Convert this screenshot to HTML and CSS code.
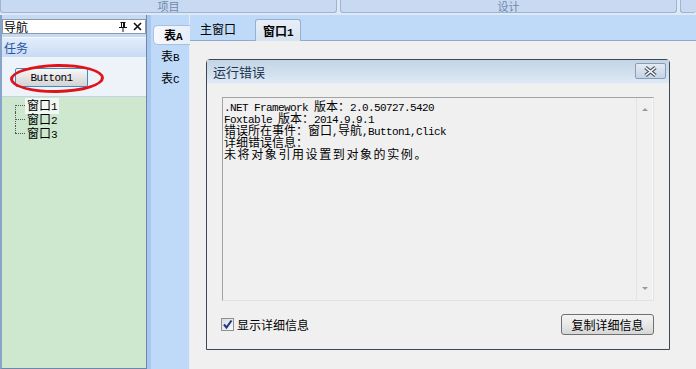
FILE: index.html
```html
<!DOCTYPE html>
<html lang="zh-CN">
<head>
  <meta charset="UTF-8" />
  <title>运行错误</title>
  <link rel="stylesheet" href="styles.css">
</head>
<body>
  <div class="topbar">
    <div class="tb-btn">项目</div>
    <div class="tb-btn">设计</div>
    <div class="tb-btn tb-rest"></div>
  </div>

  <div class="main">
    <div class="nav">
      <div class="nav-head">
        <span>导航</span>
        <span class="nav-tools">
          <svg width="8" height="10" viewBox="0 0 8 10"><path d="M1.5 0.5h5M2.5 0.5v5M5.5 0.5v5M4.5 0.5v5M0 5.5h8M4 6v4" stroke="#111" fill="none"/></svg>
          <svg width="9" height="9" viewBox="0 0 9 9"><path d="M1 1L8 8M8 1L1 8" stroke="#111" stroke-width="1.6" fill="none"/></svg>
        </span>
      </div>
      <div class="nav-task">任务</div>
      <div class="nav-btns">
        <button class="btn1">Button1</button>
        <span class="ring"></span>
      </div>
      <ul class="tree">
        <li><span class="sel">窗口<span class="en">1</span></span></li>
        <li>窗口<span class="en">2</span></li>
        <li>窗口<span class="en">3</span></li>
      </ul>
    </div>

    <div class="workspace">
      <div class="vtabs">
        <div class="vtab active">表<b class="en">A</b></div>
        <div class="vtab">表<span class="en">B</span></div>
        <div class="vtab">表<span class="en">C</span></div>
      </div>
      <div class="htabs">
        <div class="htab">主窗口</div>
        <div class="htab active">窗口<b class="en">1</b></div>
      </div>
      <div class="content">
        <div class="dialog">
          <div class="dlg-title">
            <span>运行错误</span>
            <span class="dlg-close">
              <svg width="15" height="11" viewBox="0 0 15 11"><path d="M2.5 1.5L12.5 9.5M12.5 1.5L2.5 9.5" stroke="#4a5666" stroke-width="3.6" fill="none"/><path d="M2.5 1.5L12.5 9.5M12.5 1.5L2.5 9.5" stroke="#fff" stroke-width="1.6" fill="none"/></svg>
            </span>
          </div>
          <div class="dlg-body">
            <div class="textbox">
              <div class="log">
                <div><span class="en">.NET Framework </span>版本：<span class="en">2.0.50727.5420</span></div>
                <div><span class="en">Foxtable </span>版本：<span class="en">2014.9.9.1</span></div>
                <div>错误所在事件：窗口<span class="en">,</span>导航<span class="en">,Button1,Click</span></div>
                <div>详细错误信息：</div>
                <div class="wide">未将对象引用设置到对象的实例。</div>
              </div>
              <div class="vscroll">
                <span class="arrow up"></span>
                <span class="arrow down"></span>
              </div>
            </div>
            <div class="dlg-foot">
              <label class="check">
                <span class="box">
                  <svg width="11" height="11" viewBox="0 0 11 11"><path d="M2 5.5L4.5 8.5L9.5 1.5" stroke="#23347a" stroke-width="2" fill="none"/></svg>
                </span>
                显示详细信息
              </label>
              <button class="copy-btn">复制详细信息</button>
            </div>
          </div>
        </div>
      </div>
    </div>
  </div>
</body>
</html>
```

FILE: styles.css
```css
body {
  margin: 0;
  width: 696px;
  height: 369px;
  overflow: hidden;
  background: #f0f0f0;
  font-family: "Noto Sans CJK SC", sans-serif;
  font-size: 12px;
  color: #000;
}

.en {
  font-family: "Liberation Mono", monospace;
  font-size: 11px;
  letter-spacing: -0.6px;
}

/* Top ribbon buttons */
.topbar {
  display: flex;
  gap: 3px;
  height: 15px;
  background: #dfe9f5;
}

.tb-btn {
  flex: 0 0 335px;
  height: 12px;
  line-height: 12px;
  border: 1px solid #9db4d2;
  border-top: none;
  border-radius: 0 0 3px 3px;
  background: #c7daf1;
  color: #7088ab;
  text-align: center;
  font-size: 11px;
}

.tb-rest {
  flex: 1;
  border-right: none;
}

.main {
  display: flex;
  height: 354px;
}

/* Navigation panel */
.nav {
  width: 144px;
  border-left: 2px solid #88a4ca;
  border-right: 1px solid #6d87ab;
  border-bottom: 1px solid #6d87ab;
  background: #cde8cf;
  display: flex;
  flex-direction: column;
}

.nav-head {
  display: flex;
  justify-content: space-between;
  align-items: center;
  height: 13px;
  margin-top: 4px;
  padding: 0 3px 0 1px;
  background: #fff;
  border: 1px solid #8d9aab;
  box-shadow: 0 -4px 0 #c6daf3;
  line-height: 13px;
}

.nav-tools {
  display: flex;
  align-items: center;
  gap: 6px;
}

.nav-tools svg {
  display: block;
}

.nav-task {
  margin-top: 3px;
  height: 19px;
  line-height: 19px;
  padding-left: 2px;
  border-top: 1px solid #f4f8fd;
  background: linear-gradient(#e3edf9, #c8dbf4);
  color: #2456a6;
  box-shadow: 0 -3px 0 #c6daf3;
}

.nav-btns {
  position: relative;
  height: 39px;
  background: #eef3fa;
  border-bottom: 1px solid #c7d3e2;
}

.btn1 {
  margin: 11px 0 0 13px;
  width: 73px;
  height: 19px;
  padding: 0;
  border: 1px solid #3b8ccd;
  border-radius: 2px;
  background: linear-gradient(#f8f8f8, #e4e4e4 50%, #d4d4d4);
  font-family: "Liberation Mono", monospace;
  font-size: 11px;
  letter-spacing: -0.6px;
  color: #000;
}

.ring {
  position: absolute;
  left: 8px;
  top: 7px;
  width: 88px;
  height: 23px;
  border: 3px solid #e01418;
  border-radius: 50%;
  transform: rotate(-1deg);
}

.tree {
  list-style: none;
  margin: 1px 0 0 13px;
  padding: 0;
}

.tree li {
  position: relative;
  height: 14px;
  line-height: 14px;
  padding-left: 12px;
}

.tree li::before {
  content: "";
  position: absolute;
  left: 0;
  top: 7px;
  width: 10px;
  border-top: 1px dotted #555;
}

.tree li::after {
  content: "";
  position: absolute;
  left: 0;
  top: 0;
  height: 14px;
  border-left: 1px dotted #555;
}

.tree li:first-child::after {
  top: 7px;
  height: 7px;
}

.tree li:last-child::after {
  height: 7px;
}

.tree .sel {
  display: inline-block;
  margin-left: -2px;
  padding: 0 2px;
  background: #f3f7f3;
}

/* Document workspace */
.workspace {
  flex: 1;
  display: grid;
  grid-template-columns: 43px 1fr;
  grid-template-rows: 26px 1fr;
  background: #bfdaf9;
}

.vtabs {
  grid-row: 1 / 3;
  border-left: 4px solid #a8c6ee;
  border-right: 1px solid #e6edf6;
  padding: 10px 0 0 2px;
}

.vtab {
  height: 22px;
  line-height: 22px;
  padding-left: 8px;
}

.vtab.active {
  height: 18px;
  line-height: 18px;
  padding-left: 10px;
  margin-right: -1px;
  border-radius: 5px 0 0 5px;
  background: linear-gradient(90deg, #f6f9fd, #e6eef8);
  border: 1px solid #a9c0df;
  border-right: none;
  font-weight: bold;
}

.htabs {
  display: flex;
  align-items: flex-end;
  gap: 10px;
  padding-left: 1px;
  border-bottom: 1px solid #8eaad0;
}

.htab {
  height: 22px;
  line-height: 22px;
  padding: 0 9px;
}

.htab.active {
  padding: 0 7px;
  height: 21px;
  background: linear-gradient(#e8eff8, #d7e3f2);
  border: 1px solid #97b0d2;
  border-bottom: none;
  border-radius: 3px 3px 0 0;
  font-weight: bold;
  margin-bottom: -1px;
}

.content {
  background: #f0f0f0;
  padding: 18px 0 0 16px;
}

/* Error dialog */
.dialog {
  width: 462px;
  height: 289px;
  border: 1px solid #3d4853;
  border-radius: 4px 4px 0 0;
  background: #f0f0f0;
  display: flex;
  flex-direction: column;
}

.dlg-title {
  height: 23px;
  display: flex;
  justify-content: space-between;
  align-items: center;
  padding: 0 3px 0 6px;
  background: linear-gradient(#c3d4e5, #dde9f5);
  border-bottom: 1px solid #e9eff6;
  font-size: 13px;
  color: #1d3550;
}

.dlg-close {
  display: flex;
  align-items: center;
  justify-content: center;
  width: 29px;
  height: 14px;
  margin-top: -1px;
  border: 1px solid #8b9db5;
  border-radius: 2px;
  background: linear-gradient(#e3eaf4, #c4d3e5);
}

.dlg-body {
  flex: 1;
  display: flex;
  flex-direction: column;
  padding: 13px 15px 14px 15px;
}

.textbox {
  height: 202px;
  display: flex;
  border: 1px solid;
  border-color: #a3a3a3 #e2e2e2 #e2e2e2 #a3a3a3;
  background: #f0f0f0;
}

.log {
  flex: 1;
  padding: 2px 0 0 1px;
}

.log div {
  height: 12px;
  line-height: 12px;
  white-space: pre;
}

.log .wide {
  letter-spacing: 1.6px;
}

.vscroll {
  position: relative;
  width: 15px;
  border-left: 1px solid #e3e3e3;
  border-right: 1px solid #fafafa;
  background: #f0f0f0;
}

.arrow {
  position: absolute;
  left: 5px;
  width: 0;
  height: 0;
  border-left: 3px solid transparent;
  border-right: 3px solid transparent;
}

.arrow.up {
  top: 10px;
  border-bottom: 3px solid #9a9a9a;
}

.arrow.down {
  bottom: 10px;
  border-top: 3px solid #9a9a9a;
}

.dlg-foot {
  margin-top: auto;
  display: flex;
  justify-content: space-between;
  align-items: center;
}

.check {
  display: flex;
  align-items: center;
  gap: 3px;
  margin-left: -1px;
}

.box {
  width: 11px;
  height: 11px;
  border: 1px solid #8e8f8f;
  background: linear-gradient(135deg, #d8dce4, #f8f8f8);
  display: flex;
  align-items: center;
  justify-content: center;
}

.box svg {
  display: block;
}

.copy-btn {
  width: 93px;
  height: 21px;
  padding: 0;
  border: 1px solid #707070;
  border-radius: 3px;
  background: linear-gradient(#f3f3f3, #e8e8e8 50%, #d6d6d6);
  font-family: "Noto Sans CJK SC", sans-serif;
  font-size: 12px;
  color: #000;
}
```
